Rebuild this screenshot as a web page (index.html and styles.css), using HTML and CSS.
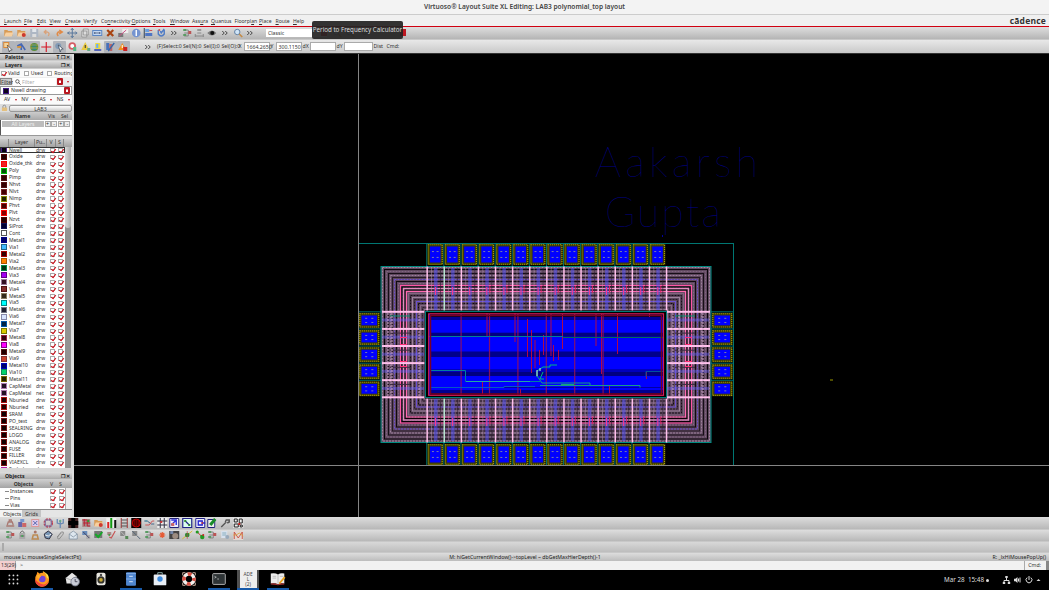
FILE: index.html
```html
<!DOCTYPE html>
<html lang="en">
<head>
<meta charset="utf-8">
<title>Virtuoso Layout Suite XL</title>
<link rel="stylesheet" href="styles.css">
</head>
<body>
<div class="app">
  <header class="title">Virtuoso® Layout Suite XL Editing: LAB3 polynomial_top layout</header>
  <nav class="menu">
    <span><u>L</u>aunch</span><span><u>F</u>ile</span><span><u>E</u>dit</span><span><u>V</u>iew</span><span><u>C</u>reate</span><span>Ver<u>i</u>fy</span><span>Co<u>n</u>nectivity</span><span><u>O</u>ptions</span><span><u>T</u>ools</span><span><u>W</u>indow</span><span>Ass<u>u</u>ra</span><span><u>Q</u>uantus</span><span>Floorpl<u>a</u>n</span><span><u>P</u>lace</span><span><u>R</u>oute</span><span><u>H</u>elp</span>
    <b class="brand">cādence</b>
  </nav>
  <div class="bar">
    <div class="icons" data-icons="folder folderRed save undo redo move copy stretch cross props info align refresh more tree dim eye more search more"></div>
    <div class="combo"><span>Classic</span><i></i></div>
    <div class="icons pair" data-icons="search search"></div>
    <div class="combo off"><span>Off</span><i></i></div>
    <div class="tip">Period to Frequency Calculator</div>
  </div>
  <div class="bar second">
    <div class="icons" data-icons="select! ruler! chip! plus pick! pinRed pinYellow lamp layers! warn! none more"></div>
    <div class="coords">
      <span>(F)Select:0</span><span>Sel(N):0</span><span>Sel(I):0</span><span>Sel(O):0</span>
      <span>X</span><em>1664.2650</em><span>Y</span><em>300.1150</em><span>dX</span><em></em><span>dY</span><em></em><span>Dist</span><span>Cmd:</span>
    </div>
  </div>
  <main class="work">
    <aside class="side">
      <div class="dock first">Palette<span>T ❐ ✕</span></div>
      <div class="dock">Layers<span>❐ ✕</span></div>
      <div class="checks"><i class="ck on"></i>Valid<i class="ck"></i>Used<i class="ck"></i>Routing</div>
      <div class="filter"><b>Filter</b><div><svg viewBox="0 0 6 6"><circle cx="2.4" cy="2.4" r="1.7"/><path d="M3.6 3.6L5.6 5.6"/></svg>Filter</div><i class="drop"></i><i class="tri"></i></div>
      <div class="current"><i class="sw"></i><span>Nwell drawing</span><i class="drop"></i></div>
      <div class="vis"><span>AV</span><i class="tri"></i><span>NV</span><i class="tri"></i><span>AS</span><i class="tri"></i><span>NS</span><i class="tri"></i></div>
      <div class="lab"><svg viewBox="0 0 8 8"><path d="M2.2 4V2.4a1.6 1.6 0 0 1 3.2 0V4" fill="none" stroke="#888"/><rect x="1" y="3.5" width="6" height="4" rx="1" fill="#e4c07e"/></svg><span>LAB3</span></div>
      <div class="names head"><b>Name</b><span>Vis</span><span>Sel</span></div>
      <div class="names all"><b>All Layers</b><i>+</i><i>-</i><i>+</i><i>-</i></div>
      <div class="split"></div>
      <div class="lhead"><span></span><span>Layer</span><span>Pu..</span><span>V</span><span>S</span></div>
      <div class="lwrap"><div class="rows" id="rows"></div><div class="scroll"><i></i></div></div>
      <div class="dock obj">Objects<span>❐ ✕</span></div>
      <div class="ohead"><b>Objects</b><span>V</span><span>S</span></div>
      <div class="owrap">
        <div class="orow">Instances<i class="ck on"></i><i class="ck on"></i></div>
        <div class="orow">Pins<i class="ck on"></i><i class="ck on"></i></div>
        <div class="orow">Vias<i class="ck on"></i><i class="ck on"></i></div>
      </div>
      <div class="tabs"><span>Objects</span><span class="dim">Grids</span></div>
    </aside>
    <svg class="layout" id="layout" viewBox="74 54 975 463" width="975" height="463"></svg>
  </main>
  <div class="bar low"><div class="icons" data-icons="arch blocks boxRed ring antenna blackplus netRed folderRed bars ladder globe wires grid netBlue diag frame pen wrench maze"></div></div>
  <div class="bar low"><div class="icons" data-icons="tree bag person cube clip mail link tickgrid tickred gridg gridx tree spark photo nodeline nodes tree pagesearch wave"></div></div>
  <div class="bar blank"></div>
  <div class="status"><span>mouse L: mouseSingleSelectPt()</span><span>M: hiGetCurrentWindow()-&gt;topLevel ~ dbGetMaxHierDepth()-1</span><span>R: _lxHiMousePopUp()</span></div>
  <div class="prompt"><b>13(29)</b><span>&gt;</span><em>Cmd:</em><i></i></div>
  <footer class="task">
    <div class="launch">
      <span><svg viewBox="0 0 20 20"><g fill="#ddd"><circle cx="6" cy="6" r="1"/><circle cx="10.500" cy="6" r="1"/><circle cx="15" cy="6" r="1"/><circle cx="6" cy="10.500" r="1"/><circle cx="10.500" cy="10.500" r="1"/><circle cx="15" cy="10.500" r="1"/><circle cx="6" cy="15" r="1"/><circle cx="10.500" cy="15" r="1"/><circle cx="15" cy="15" r="1"/></g></svg></span>
      <span class="run"><svg viewBox="0 0 20 20"><path d="M4 5l1-3 2 2q2-1 4-.8L11 1q3 2 4 4 3 2 2.800 6A7.500 7.500 0 0 1 2.500 11Q2.300 7 4 5z" fill="#ff9a20"/><path d="M2.500 10a7.500 7.500 0 0 0 15 2q-2 4-6 4-6-1-9-6z" fill="#f4453a"/><path d="M11 1q4 3 4 7l2 2q1-4-2-6z" fill="#ffe14a"/><circle cx="10.300" cy="10" r="3.700" fill="#7546d8"/><path d="M4 6q3-1 5 1-2 1-2 3-2-1-3-4z" fill="#ffb32c"/></svg></span>
      <span><svg viewBox="0 0 20 20"><path d="M3 9l7-6 5 4v8H4z" fill="#e5e5e5"/><path d="M3 9l6 2 6-4" stroke="#aaa" fill="none"/><circle cx="13.500" cy="13" r="4.700" fill="#c9ccd6" stroke="#777c8c"/><path d="M13.500 10v3h2.500" stroke="#445" fill="none"/></svg></span>
      <span><svg viewBox="0 0 20 20"><rect x="5" y="3" width="10" height="14" rx="2" fill="#e8e6df"/><circle cx="10" cy="11" r="4" fill="#33322c"/><circle cx="10" cy="11" r="2" fill="#c9a932"/><circle cx="10" cy="5.500" r="1.300" fill="#444"/></svg></span>
      <span class="run"><svg viewBox="0 0 20 20"><rect x="4.500" y="2.500" width="11" height="15" rx="1" fill="#4f86cf"/><path d="M4.500 4h11M4.500 10h11" stroke="#89b3ea"/><path d="M8 7h4M8 13h4" stroke="#e3edfa"/></svg></span>
      <span><svg viewBox="0 0 20 20"><path d="M7.500 5V3h5v2" stroke="#9bb" fill="none"/><rect x="3" y="5" width="14" height="12" rx="1" fill="#e9eef5"/><circle cx="10" cy="10" r="3" fill="#3f8de0"/></svg></span>
      <span><svg viewBox="0 0 20 20"><circle cx="10" cy="10" r="5.500" fill="none" stroke="#f1efec" stroke-width="4"/><circle cx="10" cy="10" r="5.500" fill="none" stroke="#d75043" stroke-width="4" stroke-dasharray="4.300 4.340" stroke-dashoffset="2.100"/><path d="M3 3h3M3 3v3M17 3h-3M17 3v3M3 17h3M3 17v-3M17 17h-3M17 17v-3" stroke="#d8b8a8"/></svg></span>
      <span class="run"><svg viewBox="0 0 20 20"><rect x="3" y="4" width="14" height="12" rx="1" fill="#2e3436" stroke="#bbb"/><path d="M5 7l2 1-2 1M8 10h2" stroke="#ddd" fill="none" stroke-width=".7"/></svg></span>
      <span class="run active"><small>ADE<br>L<br>(2)</small></span>
      <span class="run"><svg viewBox="0 0 20 20"><path d="M2 4q5-1 8 1 3-2 7-1v11q-4-1-7 1-3-2-8-1z" fill="#eee"/><path d="M10 5v11M4 7h4M4 9h4M12 7h4" stroke="#999" stroke-width=".6"/><path d="M2 15q5-1 8 1 3-2 7-1v1q-4 0-7 1-3-1-8-1z" fill="#a33"/><path d="M17.500 8l-6 7" stroke="#e9a21d" stroke-width="2"/></svg></span>
    </div>
    <div class="clock">Mar 28&nbsp; 15:48<i></i></div>
    <svg class="tray" viewBox="0 0 40 10"><path d="M4.500 2v3M2 8V5.500h5V8" stroke="#ddd" fill="none"/><path d="M3.300 1h2.400v2H3.300zM.8 7h2.400v2H.8zM5.800 7h2.400v2H5.800z" fill="#ddd"/><path d="M12 3.700h1.500L15.500 2v6l-2-1.700H12z" fill="#ddd"/><path d="M16.500 3.500v3M18 2.500v5" stroke="#ddd"/><path d="M25.200 2.600a2.900 2.900 0 1 0 3.600 0M27 1v4" stroke="#ddd" fill="none"/><path d="M34.500 6l2-2 2 2z" fill="#ddd"/></svg>
  </footer>
</div>
<script src="main.js"></script>
</body>
</html>
```
FILE: styles.css
```css
* { box-sizing: border-box; }
body { margin: 0; width: 1049px; height: 590px; overflow: hidden; background: #000; }
.app { width: 1049px; height: 590px; display: flex; flex-direction: column; font: 5.2px/7px "Noto Sans", sans-serif; color: #333; white-space: nowrap; }
i, em { font-style: normal; }
.title { height: 14px; flex: none; background: #f3f3f3; text-align: center; font: 600 6.6px/14px "Noto Sans", sans-serif; color: #444; }
.menu { height: 13px; flex: none; background: #f0f0f0; border-top: 1px solid #ccc; border-bottom: 1px solid #d00010; display: grid; grid-template-columns: 20px 13px 12.500px 15.500px 18.500px 17.500px 30.500px 21.500px 17px 22px 19px 23.500px 24.500px 16.500px 17.500px 40px 1fr; padding: 2px 3px 0 4px; line-height: 8px; font-size: 5.100px; }
.menu u { text-decoration-thickness: .5px; text-underline-offset: 1px; }
.brand { text-align: right; font: 700 8.500px/8px "Open Sans", sans-serif; color: #333; letter-spacing: .2px; }
.bar { height: 13px; flex: none; display: flex; align-items: center; background: linear-gradient(#dedede, #b5b5b5); padding-left: 2px; border-bottom: 1px solid #c8c8c8; position: relative; }
.icons { display: flex; }
.ic { width: 12.750px; height: 12px; display: block; padding: 1px; flex: none; }
.ic svg { width: 10.500px; height: 10px; display: block; overflow: visible; }
.ic.sel { background: #b2b5bb; border-radius: 1px; }
.combo { width: 61px; height: 8px; margin-left: 9px; background: #fff; display: flex; justify-content: space-between; line-height: 8px; padding-left: 2px; }
.combo i, .drop { width: 6px; height: 7px; background: #bd1720; flex: none; display: block; }
.drop { clip-path: inset(0 round 1px); background: linear-gradient(135deg, transparent 50%, transparent 50%), radial-gradient(circle at 50% 52%, #fff 0 1px, #b81720 1.500px); }
.combo.off { width: 45px; margin-left: 4px; background: #bbb; }
.pair { margin-left: 4px; }
.tip { position: absolute; left: 312px; top: -6px; width: 91px; height: 18px; border-radius: 2px; background: #262424ee; color: #ddd; font-size: 6.200px; line-height: 17px; text-align: center; z-index: 2; }
.second { height: 14px; background: linear-gradient(#e8e8e8, #c9c9c9); border-bottom: 1px solid #333; }
.coords { display: grid; grid-template-columns: 26px 20.500px 18px 17px 5px 27px 5px 27px 7px 27px 7px 30px 13px 20px; margin-left: 2px; line-height: 8px; }
.coords em { background: #fff; border: .5px solid #aaa; height: 9px; padding-left: 2px; margin-right: 1px; }
.work { height: 463px; flex: none; display: flex; background: #000; }
.side { width: 74px; height: 463px; border-right: 2px solid #ddd; background: #eee; display: flex; flex-direction: column; color: #333; overflow: hidden; flex: none; }
.side > * { flex: none; }
.layout { display: block; flex: none; }
.dock { height: 8px; background: linear-gradient(#ddd, #aaa); font-weight: 700; line-height: 8px; padding: 0 2px 0 5px; display: flex; justify-content: space-between; border-bottom: 1px solid #ccc; color: #222; }
.dock.first { height: 7px; line-height: 6px; }
.dock span { font-size: 5px; }
.checks { height: 8px; display: flex; align-items: center; gap: 2px; background: #fafafa; padding-left: 1px; }
.checks .ck + .ck { margin-left: 2px; }
.checks { font-size: 5.200px; }
.ck { width: 5px; height: 5px; background: #fff; border: .5px solid #aaa; display: inline-block; flex: none; position: relative; }
.ck.on::after { content: ""; position: absolute; left: 1.200px; top: -.8px; width: 2.200px; height: 4px; border: solid #d3101c; border-width: 0 1.200px 1.200px 0; transform: rotate(38deg); }
.filter { height: 9px; display: flex; align-items: center; gap: 1px; line-height: 8px; }
.filter b { width: 12px; font-weight: 400; background: #ccc; border: .5px solid #888; height: 7px; line-height: 6px; }
.filter div { width: 43px; background: #fff; color: #aaa; height: 8px; display: flex; align-items: center; gap: 1px; padding-left: 2px; }
.filter svg { width: 6px; height: 6px; fill: none; stroke: #444; stroke-width: .8; }
.tri { border: 1.800px solid transparent; border-top: 2px solid #c5101c; border-bottom: 0; width: 0; height: 0; display: inline-block; }
.filter .tri { margin-left: 3px; }
.current { height: 9px; display: flex; align-items: center; background: #fff; border: .5px solid #999; padding: 0 1px 0 2px; gap: 2px; }
.current span { flex: 1; }
.current .sw { width: 6px; height: 6px; background: #0c0318; border: 1px solid #3f1684; }
.vis { height: 9px; display: flex; align-items: center; justify-content: space-between; padding: 0 2px 0 4px; background: #fafafa; }
.lab { height: 8px; display: flex; align-items: center; background: #ddd; padding-left: 1px; }
.lab svg { width: 7px; height: 8px; }
.lab span { flex: 1; margin-left: 1px; text-align: center; background: linear-gradient(#fff, #ccc); border: .5px solid #999; border-radius: 2px; height: 7px; line-height: 6.500px; }
.names { display: grid; grid-template-columns: 45px 13px 13px; text-align: center; height: 8px; line-height: 8px; }
.head { background: linear-gradient(#ccc, #a9a9a9); height: 8px; }
.all { height: 15px; background: #fff; grid-template-columns: 43px 6px 6px 6px 6px; gap: 0 .6px; align-items: start; padding-top: 1px; border-left: 1px solid #555; }
.all b { font-weight: 400; background: #bcbcbc; color: #eee; height: 6px; line-height: 6px; margin-left: 1px; }
.all i { height: 6px; line-height: 5px; border: .5px solid #aaa; background: #ececec; }
.split { height: 4px; background: #d5d5d5; border-top: 1px solid #999; }
.lhead { height: 7.500px; display: grid; grid-template-columns: 9px 26px 12px 9px 8px; background: linear-gradient(#ccc, #a2a2a2); text-align: center; line-height: 7px; }
.lhead span { border-right: .5px solid #888; }
.lwrap { height: 321.500px; display: flex; background: #fff; overflow: hidden; }
.rows { width: 64.500px; }
.row { height: 6.956px; display: grid; grid-template-columns: 9px 27px 12px 9px 7px; align-items: center; line-height: 6.900px; font-size: 5px; }
.row:first-child { outline: 1px solid #333; outline-offset: -1px; }
.row .sw { width: 6px; height: 6px; margin-left: 1px; border: 1px solid; }
.row .ck { justify-self: center; width: 4.500px; height: 4.500px; }
.scroll { width: 7px; background: #929292; border-right: 1px solid #ddd; }
.scroll i { display: block; width: 6px; height: 81px; background: linear-gradient(90deg, #d8d8d8, #aaa); border-radius: 0 0 3px 3px; }
.obj { height: 12px; border-top: 4px solid #d7d7d7; }
.ohead { height: 8px; display: grid; grid-template-columns: 47px 9px 9px; text-align: center; background: linear-gradient(#ccc, #a4a4a4); line-height: 8px; }
.owrap { height: 21px; width: 66px; background: #fff; border-right: 1px solid #aaa; }
.orow { height: 7px; display: grid; grid-template-columns: 38px 9px 9px; align-items: center; padding-left: 10px; position: relative; }
.orow::before { content: ""; position: absolute; left: 5px; top: 3px; width: 4px; border-top: .5px solid #888; }
.orow .ck { justify-self: center; }
.tabs { height: 10px; display: flex; line-height: 9px; background: #e5e5e5; border-top: 1px solid #888; }
.tabs span { width: 22px; padding-left: 3px; background: #f3f3f3; }
.tabs .dim { background: #c4c4c4; width: 19px; }
.low { height: 12.500px; background: linear-gradient(#ddd, #b8b8b8); padding-left: 3.500px; }
.low .ic { width: 12.680px; }
.low .ic svg { width: 10.500px; }
.low .ic { height: 11.500px; padding-top: .8px; }
.blank { height: 11px; background: linear-gradient(#d8d8d8, #bdbdbd); }
.blank::before { content: ""; width: 2px; height: 8px; background: #aaa; }
.status { height: 8px; flex: none; display: grid; grid-template-columns: 1fr 1fr 1fr; background: linear-gradient(#ddd, #bcbcbc); padding: 0 3px 0 4px; line-height: 8px; color: #222; }
.status span:nth-child(2) { text-align: center; }
.status span:nth-child(3) { text-align: right; }
.prompt { height: 9px; flex: none; display: flex; background: #f1f1f1; line-height: 9px; }
.prompt b { width: 16px; background: #f3cfd0; font-weight: 400; padding-left: 1px; border-right: 1px solid #aaa; }
.prompt span { flex: 1; padding-left: 4px; }
.prompt em { border-left: 1px solid #aaa; padding: 0 5px 0 3px; }
.prompt i { width: 3px; background: #888; }
.task { height: 20px; flex: none; background: #000; display: flex; align-items: center; color: #ddd; }
.launch { display: flex; padding-left: 2px; gap: 7.400px; }
.launch > span { width: 22px; height: 20px; display: flex; justify-content: center; border-bottom: 2px solid transparent; }
.launch .run { border-bottom-color: #1759a8; }
.launch svg { width: 18px; height: 18px; }
.launch .active { background: #505050; }
.active small { width: 17px; height: 18px; background: #eee; color: #444; text-align: center; font: 4.800px/5px "Noto Sans", sans-serif; padding-top: 1.500px; }
.clock { margin-left: auto; display: flex; align-items: center; gap: 2px; font-size: 6.300px; line-height: 20px; margin-right: 13px; }
.clock i { width: 3px; height: 3px; background: #ddd; border-radius: 50%; }
.tray { width: 40px; height: 10px; margin-right: 7px; }
```
FILE: main.js
```js
// Toolbar glyphs, drawn on a 10 x 10 grid.
const box = (x, y, w, h, c) => `<rect x="${x}" y="${y}" width="${w}" height="${h}" fill="${c}"/>`;
const line = (d, c, w = 1) => `<path d="${d}" fill="none" stroke="${c}" stroke-width="${w}"/>`;
const dot = (x, y, r, c) => `<circle cx="${x}" cy="${y}" r="${r}" fill="${c}"/>`;
const folder = '<path d="M1 2h3l1 1h4v5H1z" fill="#d89b55"/><path d="M2.500 4.500H10L8.500 8.500H1z" fill="#f7d0a0"/>';
const tree = line('M2 2h4M2 5h4M2 8h4M6 2v6', '#777', .8) + box(1, 1, 3, 2, '#5a9c64') + box(1, 6, 3, 2, '#5a9c64') + box(6, 3, 3, 3, '#b55');
const search = '<circle cx="4" cy="4" r="2.700" fill="#cfe4f7" stroke="#6684a5"/>' + line('M6 6l3 3', '#c58b45', 1.6);
const glyphs = {
  folder, folderRed: folder + dot(7.5, 7, 2, '#cc3a2e'),
  save: box(1, 1, 8, 8, '#aeb7c4') + box(3, 1, 4, 3, '#e3e7eb') + box(3, 6, 4, 3, '#ddd'),
  undo: line('M3 4h3q3 1 1 4M5 2L3 4l2 2', '#d9a27a', 1.3), redo: line('M7 4H4Q2 6 4 8M5 2l3 2-3 2', '#e08a46', 1.5),
  move: line('M5 0v10M0 5h10M3.500 2L5 .5 6.500 2M3.500 8L5 9.500 6.500 8M2 3.500L.5 5 2 6.500M8 3.500L9.500 5 8 6.500', '#58779c'),
  copy: '<path d="M3 1h5v6H3zM1.500 3h5v6h-5z" fill="#ddd" stroke="#888" stroke-width=".7"/>',
  stretch: box(0, 2, 10, 6, '#5b86c4') + box(1, 3, 8, 4, '#c5d8f1') + line('M2 5h6M3 4L2 5l1 1M7 4l1 1-1 1', '#346', .7),
  cross: line('M2 2l6 6M8 2L2 8', '#a84412', 2.2),
  props: box(4, 1, 6, 4, '#eee') + box(0, 5, 5, 4, '#777') + line('M1 8l7-6', '#c58', 1),
  info: dot(5, 5, 4.3, '#7594d0') + box(4.3, 2, 1.4, 6, '#fff'),
  align: line('M1 0v10', '#345') + box(2, 1, 4, 3, '#69a0df') + box(2, 5, 7, 3, '#4e75c4') + box(6, 2, 3, 1, '#c55'),
  refresh: line('M2 2v4q3 4 6 0V2M4 3l1 2 3-4', '#4f7bc5', 1.4) + dot(3, 2, 1, '#c55'),
  more: line('M2 3l2 2-2 2M5 3l2 2-2 2', '#333', .9),
  tree, dim: box(3, 1, 4, 2, '#999') + line('M1 8h8M1 6v3M9 6v3M3 5h4', '#888'),
  eye: '<path d="M0 5q5-5 9 0-4 5-9 0" fill="#777"/>' + dot(5, 5, 2, '#111'), search,
  select: box(0, 0, 6, 6, '#d98b3c') + box(1, 1, 4, 4, '#f5d49b') + '<path d="M4 3l5 5-2 0-1 2z" fill="#fff" stroke="#333" stroke-width=".6"/>',
  ruler: line('M1 4l4-2 4 6M5 2v6', '#4567b5', 1.6) + line('M1 5h4', '#d6963d', 2),
  chip: dot(5, 5, 4, '#5e8d39') + box(3, 2, 4, 6, '#387') + line('M1 3h8M1 6h8', '#ca4', .7),
  plus: line('M5 0v10M0 5h10', '#d51624', 1.1),
  pick: dot(4, 4, 3, '#829ab5') + '<path d="M4 3l5 4-2 0-1 3z" fill="#fff" stroke="#345" stroke-width=".7"/>',
  pinRed: dot(5, 4, 3.8, '#d45c65') + dot(5, 4, 2, '#fff') + box(6, 5, 3, 4, '#5b8'),
  pinYellow: '<path d="M5 0l4 8H1z" fill="#e9ca42"/>' + box(4.5, 3, 1, 3, '#333') + box(7, 6, 3, 3, '#6a8'),
  lamp: box(3, 1, 5, 6, '#ebd943') + box(2, 7, 7, 2, '#56b') + box(4, 2, 2, 4, '#6af'),
  layers: box(1, 1, 3, 7, '#4770bb') + box(4, 2, 3, 7, '#b66') + line('M9 1L3 9', '#36a', 1.3),
  warn: '<path d="M4 1l4 7H0z" fill="#ef8f1f"/>' + box(5, 5, 4, 4, '#c22') + box(3.5, 3, 1, 3, '#fff'), none: '',
  arch: line('M1 8h8M2 7l1-3h4l1 3M4 4V2h2v2', '#a97972', 1.3), blocks: box(1, 4, 4, 5, '#66a') + box(5, 5, 4, 4, '#c66') + box(3, 1, 4, 3, '#7696cf'),
  boxRed: box(1, 1, 8, 8, '#d99') + box(2, 2, 6, 6, '#dce') + line('M3 3l4 4M7 3L3 7', '#56a'),
  ring: '<circle cx="5" cy="5" r="3.800" fill="none" stroke="#c23b4b" stroke-width="2" stroke-dasharray="2 1"/><rect x="2" y="2" width="6" height="6" fill="none" stroke="#77a"/>',
  antenna: line('M5 3v7M2 1v4l3 1 3-1V1', '#688ab6', 1.3) + dot(5, 3, 1.2, '#6a8'),
  blackplus: box(0, 0, 10, 10, '#422') + box(3, 0, 4, 10, '#000') + box(0, 3, 10, 4, '#000'),
  netRed: box(1, 1, 8, 8, '#a88') + line('M1 2h5v6h3M3 1v7M2 5h7', '#b23') + dot(7, 3, 1.2, '#393'),
  bars: box(0, 0, 10, 10, '#eee') + box(1, 4, 2, 6, '#d22') + box(4, 0, 2, 10, '#191') + box(8, 2, 2, 8, '#111'),
  ladder: line('M2 0v10M8 0v10', '#a33') + line('M2 2h6M2 5h6M2 8h6', '#555', 1.2),
  globe: box(0, 0, 10, 10, '#080000') + line('M1 3h8M1 5h8M1 7h8M3 1v8M5 1v8M7 1v8', '#c00', .5) + '<circle cx="5" cy="5" r="4" fill="none" stroke="#c00"/>',
  wires: line('M0 3h3l4 3h3', '#468') + line('M1 7h4l3-4h2', '#c55') + box(1, 2, 2, 2, '#69a'),
  grid: box(0, 0, 10, 10, '#eee') + line('M3 0v10M7 0v10M0 3h10M0 7h10', '#334') + box(3, 3, 2, 2, '#c33'),
  netBlue: box(0, 0, 10, 10, '#eef') + line('M.5.5h9v9h-9z', '#227') + line('M2 7l5-5M2 2h5v5', '#33d', 1.4) + box(2, 5, 3, 3, '#c66'),
  diag: box(0, 0, 10, 10, '#dfe') + line('M.5.5h9v9h-9zM3 3l4 4', '#228', 1.2) + box(2, 2, 2, 2, '#383') + box(6, 6, 2, 2, '#383'),
  frame: box(0, 0, 10, 10, '#eef') + line('M.5.5h9v9h-9z', '#228') + line('M3 3h4v4H3zM7 5h3', '#22c', 1.3) + dot(7, 5, 1, '#c33'),
  pen: box(0, 1, 8, 9, '#eee') + line('M.5 1.500h7v8h-7z', '#227') + line('M3 7l5-6', '#188b28', 3),
  wrench: line('M1 9l5-5M5 4l1-2 3 0v2L7 5', '#555', 1.4), maze: box(0, 0, 10, 10, '#eee') + line('M1 1h3v3H1zM6 1h3v4H6zM1 6h4v3H1zM7 7h2v2H7z', '#222') + box(5, 5, 2, 2, '#c22'),
  bag: box(2, 3, 6, 6, '#aaa') + line('M3 3q2-4 4 0M3 6h4', '#666') + dot(5, 6, 1, '#4a5'), person: dot(5, 2, 1.5, '#a76') + line('M2 9l1-4h4l1 4z', '#bd8b52', 1.5),
  cube: '<path d="M1 4l4-3 4 3-3 5-4-1z" fill="#7795b5" stroke="#334"/>' + line('M2 5l3 1 3-2', '#eee'), clip: line('M2 7l4-5q3-1 2 2L4 9q-3 0-1-3l3-3', '#888', .9),
  mail: '<path d="M1 4l4-3 4 3v5H1z" fill="#dde6ee" stroke="#789" stroke-width=".7"/>' + line('M1 4l4 3 4-3', '#789', .7),
  link: box(1, 1, 5, 4, '#678cba') + box(5, 5, 4, 4, '#aaa') + line('M2 2l6 6', '#446'), tickgrid: box(1, 1, 8, 7, '#777') + line('M2 4l3 3 4-5', '#16a829', 2),
  tickred: box(1, 2, 4, 3, '#a88') + line('M3 7l2 1 4-7', '#c65454', 1.2) + dot(3, 5, 1, '#494'), gridg: box(1, 1, 5, 5, '#888') + line('M1 1l8 8', '#bbb') + box(6, 6, 3, 3, '#585'),
  gridx: box(1, 1, 5, 5, '#888') + line('M1 1l4 4M6 6l3 3', '#567'), spark: line('M2 5h6M5 2v6M3 3l4 4M7 3L3 7', '#e65a34', 1.2),
  photo: box(0, 1, 10, 8, '#444') + dot(6, 6, 3, '#9c8c80') + box(1, 1, 3, 3, '#78a'), nodeline: line('M0 9L10 1', '#d9bd32') + dot(5, 5, 2.3, '#2b8b33') + line('M5 1v8', '#c44', .6),
  nodes: line('M2 2l5 5', '#c33') + dot(2, 2, 1.6, '#292') + dot(7, 7, 2.2, '#292') + dot(8, 5, 1, '#c22'),
  pagesearch: box(1, 1, 6, 7, '#d7e1ee') + line('M2 3h4M2 5h4', '#69a', .7) + dot(7, 7, 2, '#9ab'), wave: box(0, 0, 10, 10, '#e2d5d0') + line('M1 9V2l4 6 4-6v7', '#ca5a4b') + line('M0 5h3l3-2 4 3', '#d8a22c', .7)
};
document.querySelectorAll('[data-icons]').forEach(el => {
  el.innerHTML = el.dataset.icons.split(' ').map(n => `<span class="ic${n.endsWith('!') ? ' sel' : ''}"><svg viewBox="0 0 10 10">${glyphs[n.replace('!', '')]}</svg></span>`).join('');
});

// Layer palette: name, fill, border.
const layers = `Nwell,#08020f,#4a1a90;Oxide,#200,#500;Oxide_thk,#e22,#f00;Poly,#0a4a0a,#0b0;Pimp,#300,#511;Nhvt,#300,#511;Nlvt,#400,#722;Nimp,#220,#880;Phvt,#400,#a11;Plvt,#800,#f00;Nzvt,#200,#500;SiProt,#003,#115;Cont,#fff,#555;Metal1,#006,#008;Via1,#42baff,#268;Metal2,#300,#a00;Via2,#ff8000,#a50;Metal3,#031,#084;Via3,#a000f0,#608;Metal4,#312,#979;Via4,#822b2b,#511;Metal5,#332a1b,#887c60;Via5,#0ff,#088;Metal6,#223,#778;Via6,#d9e4ff,#88a;Metal7,#024,#05a;Via7,#d9ca00,#770;Metal8,#301,#924;Via8,#f0f,#808;Metal9,#200,#511;Via9,#c8402c,#833;Metal10,#006,#00b;Via10,#00d46a,#185;Metal11,#220,#760;CapMetal,#212,#a7a;CapMetal,#212,#a7a;Nburied,#200,#a11;Nburied,#200,#a11;SRAM,#100,#711;PO_text,#100,#711;SEALRING,#100,#711;LOGO,#100,#711;ANALOG,#100,#711;FUSE,#100,#711;FILLER,#100,#711;VIAEXCL,#100,#711;Exclude,#e4b,#b2a`.split(';');
document.getElementById('rows').innerHTML = layers.map((l, i) => {
  const [name, fill, edge] = l.split(',');
  return `<div class="row"><i class="sw" style="background:${fill};border-color:${edge}"></i><span>${name}</span><span>${i === 35 || i === 37 ? 'net' : 'drw'}</span><i class="ck on"></i><i class="ck on"></i></div>`;
}).join('');

// Chip layout.
let s = '';
const rect = (x, y, w, h, fill, extra = '') => { s += `<rect x="${x}" y="${y}" width="${w}" height="${h}" fill="${fill}" ${extra}/>`; };
const frame = (l, t, r, b, c, w = 1, dash = '') => rect(l, t, r - l, b - t, 'none', `stroke="${c}" stroke-width="${w}" stroke-dasharray="${dash}"`);
rect(74, 54, 975, 463, '#000');
s += `<g fill="#000090" font-family="Lato" font-weight="100" font-size="41"><text x="595" y="176.500" textLength="163" lengthAdjust="spacing">Aakarsh</text><text x="605" y="227" textLength="116" lengthAdjust="spacing">Gupta</text></g>`;

function pad(x, y, w, h) {
  rect(x, y, w, h, '#3c3905');
  frame(x + .8, y + .8, x + w - .8, y + h - .8, '#aaa000', 1.1, '1 1');
  rect(x + 2.5, y + 2.5, w - 5, h - 5, '#0000ff');
  for (const a of [.35, .65]) for (const b of [.36, .64]) rect(x + w * a - 1, y + h * b - .5, 2, 1, '#777baa');
}
for (let i = 0; i < 14; i++) {
  const x = 427.5 + i * 17.1;
  pad(x, 244, 15.5, 21); pad(x, 444, 15.5, 21);
  rect(x - 1.2, 243, .9, 24, '#007c78'); rect(x - 1.2, 442, .9, 23, '#007c78');
}
for (let i = 0; i < 5; i++) {
  const y = 313 + i * 17.1;
  pad(359, y, 20.5, 14.8); pad(712, y, 20.5, 14.8);
  rect(359, y - 1.6, 23, .9, '#007c78'); rect(710, y - 1.6, 23, .9, '#007c78');
}

s += '<path d="M381 266H711V442.500H381zM426 311.500V398H666V311.500z" fill="#5f475f" fill-rule="evenodd"/>';
const ringColors = ['#a489a2', '#080408', '#806780', '#160e16', '#9c839c', '#251a25', '#6a51d0', '#100a10', '#846884', '#2a1c2a', '#927792'];
for (let i = 0; i < 22; i++) {
  const d = 1.5 + i * 2;
  frame(381 + d, 266 + d, 711 - d, 442.5 - d, ringColors[i % 11], 1, i % 2 ? '' : '2 1');
}
for (const [d, c] of [[19.5, '#ff55a5'], [21, '#060006'], [22.5, '#e58bc0'], [24, '#100008'], [25.5, '#ff69b0']]) frame(381 + d, 266 + d, 711 - d, 442.5 - d, c, 1.2);
frame(381, 266.5, 711, 442.5, '#008c82', 1);

for (let i = 0; i < 15; i++) {
  const x = 427 + i * 17.1;
  if (i < 14) for (const y of [268, 399]) {
    rect(x + 7, y, 3.5, 42, '#5452f5', 'opacity=".55"');
    rect(x + 4, y, 1, 42, '#b495b4', 'opacity=".5"'); rect(x + 13, y, 1, 42, '#302034', 'opacity=".6"');
    rect(x + 8, y + 19, 1, 8, '#ff3a86');
    if (i > 2) rect(x + 11, y + 18, 1, 7, '#d22360');
  }
  for (const y of [266.5, 398]) rect(x - .6, y, 1.5, 44.5, i === 1 ? '#b7e4d0' : '#ffc0ec');
}
for (let i = 0; i < 6; i++) {
  const y = 311.5 + i * 17.1;
  for (const x of [382, 667]) {
    if (i < 5) { rect(x, y + 7, 42, 3, '#6c63ff', 'opacity=".45"'); rect(x + 8, y + 4, 20, 1, i < 1 ? '#008f75' : '#3b2b42'); }
    rect(x, y - .7, 43, 2, '#ffc0ec');
  }
}
for (const x of [388, 392, 419, 673, 679, 703]) s += `<path d="M${x} 313v83" stroke="#d7a9d2" stroke-width="1" stroke-dasharray="2 1"/>`;
for (const y of [337, 344, 361, 366]) { rect(400, y, 7, 1, '#ff2f74'); rect(685, y, 7, 1, '#ff2f74'); }

rect(424.5, 310.5, 242.5, 88, '#000');
frame(425.5, 311.5, 666.5, 397.5, '#007b78', 1);
rect(428.5, 314, 235, 81, '#0000ff');
for (const [y, h, c] of [[314, 3, '#000023'], [317, 3, '#000095'], [332.7, 4, '#000082'], [351.5, 5.5, '#00008b'], [369, 3, '#0000bd'], [372, 4, '#000080'], [387, 1, '#0000a5'], [390, 3, '#000090'], [393, 2, '#00002d']]) rect(430, y, 233, h, c);
for (let i = 0; i < 6; i++) rect(460.5 + i * 28.4, 314, 1.2, 81, '#9c1450', 'opacity=".85"');
for (const [x, y, h] of [[486.500, 313, 23], [514.500, 313, 29], [527, 319, 38], [531, 330, 43], [534.500, 340, 28], [539, 350, 15], [543, 335, 20], [550.500, 314, 42], [553, 345, 16], [558, 350, 10], [562, 314, 35], [595.500, 314, 32], [601, 314, 60], [617, 314, 40], [649, 313, 4], [482, 382, 12], [520, 389, 7], [609, 386, 9], [646, 371, 8]]) rect(x, y, 1, h, '#b00a48');
const tealLine = (d, c = '#007f9e') => { s += line(d, c, 1); };
tealLine('M429 336.500H563'); tealLine('M563 337.500H664', '#006a60');
tealLine('M431 370.500H465.500V381.500H540'); tealLine('M466 381.500H530', '#22a9a0'); tealLine('M430 387.500H504V386.500H535', '#0658c4');
tealLine('M537 376l5 7h48v3M540 385.500H640v2M561 384.500h13', '#159c88'); tealLine('M646 377V371.500H664', '#0050a0');
tealLine('M537 377V371l6-4h7v-2h7M543 372l-3 7h4', '#00b680'); tealLine('M537 370v6M540 368v3', '#cdeedf');
frame(428.7, 313.8, 663.5, 395.3, '#d51a58', 1.2);
frame(430.5, 315.5, 661.500, 394, '#780026', 1.500);
frame(358.5, 243.5, 733.5, 465.5, '#007773');
rect(358, 54, 1, 463, '#858585'); rect(74, 465, 975, 1, '#858585');
rect(662, 235, 1, 2, '#0000a0'); rect(830, 379.500, 3, 1, '#9b9a00');
document.getElementById('layout').innerHTML = s;
```
